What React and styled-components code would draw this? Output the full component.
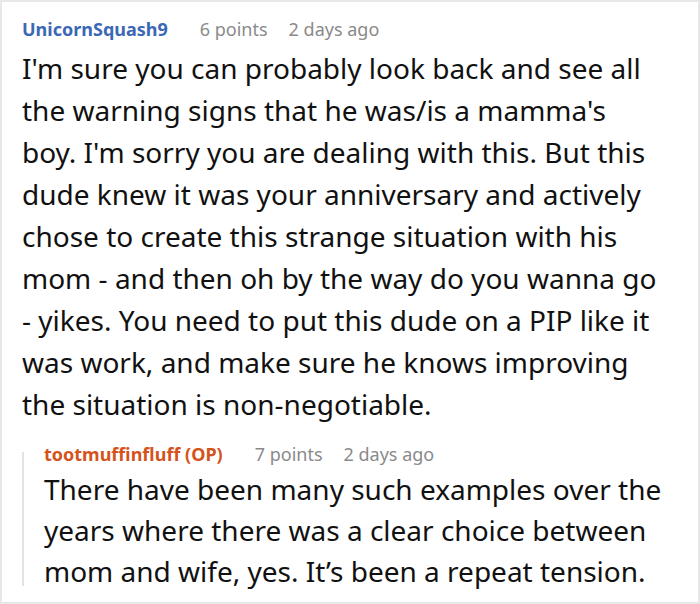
import React from 'react';
import styled, { createGlobalStyle } from 'styled-components';

const GlobalStyle = createGlobalStyle`
  html, body {
    margin: 0;
    padding: 0;
    background: #fff;
  }
  body {
    font-family: "Noto Sans", "Open Sans", sans-serif;
  }
`;

const comment = {
  author: 'UnicornSquash9',
  points: '6 points',
  time: '2 days ago',
  lines: [
    "I'm sure you can probably look back and see all",
    "the warning signs that he was/is a mamma's",
    "boy. I'm sorry you are dealing with this. But this",
    'dude knew it was your anniversary and actively',
    'chose to create this strange situation with his',
    'mom - and then oh by the way do you wanna go',
    '- yikes. You need to put this dude on a PIP like it',
    'was work, and make sure he knows improving',
    'the situation is non-negotiable.',
  ],
  reply: {
    author: 'tootmuffinfluff (OP)',
    points: '7 points',
    time: '2 days ago',
    lines: [
      'There have been many such examples over the',
      'years where there was a clear choice between',
      'mom and wife, yes. It’s been a repeat tension.',
    ],
  },
};

function Meta({ author, points, time, op }) {
  return (
    <MetaRow>
      <Author $op={op}>{author}</Author>
      <Points>{points}</Points>
      <Time>{time}</Time>
    </MetaRow>
  );
}

function Lines({ lines }) {
  return lines.map((line, i) => (
    <React.Fragment key={i}>
      {line}
      {i < lines.length - 1 && <br />}
    </React.Fragment>
  ));
}

export default function App() {
  const { reply } = comment;
  return (
    <>
      <GlobalStyle />
      <Frame>
        <Comment>
          <Meta author={comment.author} points={comment.points} time={comment.time} />
          <Body>
            <Lines lines={comment.lines} />
          </Body>
        </Comment>

        <Reply>
          <Meta author={reply.author} points={reply.points} time={reply.time} op />
          <Body $reply>
            <Lines lines={reply.lines} />
          </Body>
        </Reply>
      </Frame>
    </>
  );
}

const Frame = styled.div`
  box-sizing: border-box;
  width: 700px;
  height: 604px;
  border: 2px solid #e8e8e8;
  padding: 13px 20px 0 20px;
  overflow: hidden;
  background: #fff;
`;

const Comment = styled.section``;

const MetaRow = styled.div`
  display: flex;
  align-items: baseline;
  font-size: 18px;
  line-height: 28px;
  white-space: nowrap;
`;

const Author = styled.span`
  font-weight: 700;
  color: ${(p) => (p.$op ? '#d4531c' : '#3b68b4')};
  margin-right: 32px;
`;

const Points = styled.span`
  color: #8a8a8a;
  margin-right: 21px;
`;

const Time = styled.span`
  color: #8a8a8a;
`;

const Body = styled.p`
  margin: ${(p) => (p.$reply ? '1px 0 0' : '4px 0 0')};
  font-size: 28px;
  line-height: ${(p) => (p.$reply ? '41px' : '42px')};
  color: #111;
  white-space: nowrap;
`;

const Reply = styled.section`
  position: relative;
  margin-top: 15px;
  padding-left: 22px;

  &::before {
    content: '';
    position: absolute;
    left: 0;
    top: 12px;
    bottom: 6px;
    width: 2px;
    background: #e2e2e2;
  }
`;
